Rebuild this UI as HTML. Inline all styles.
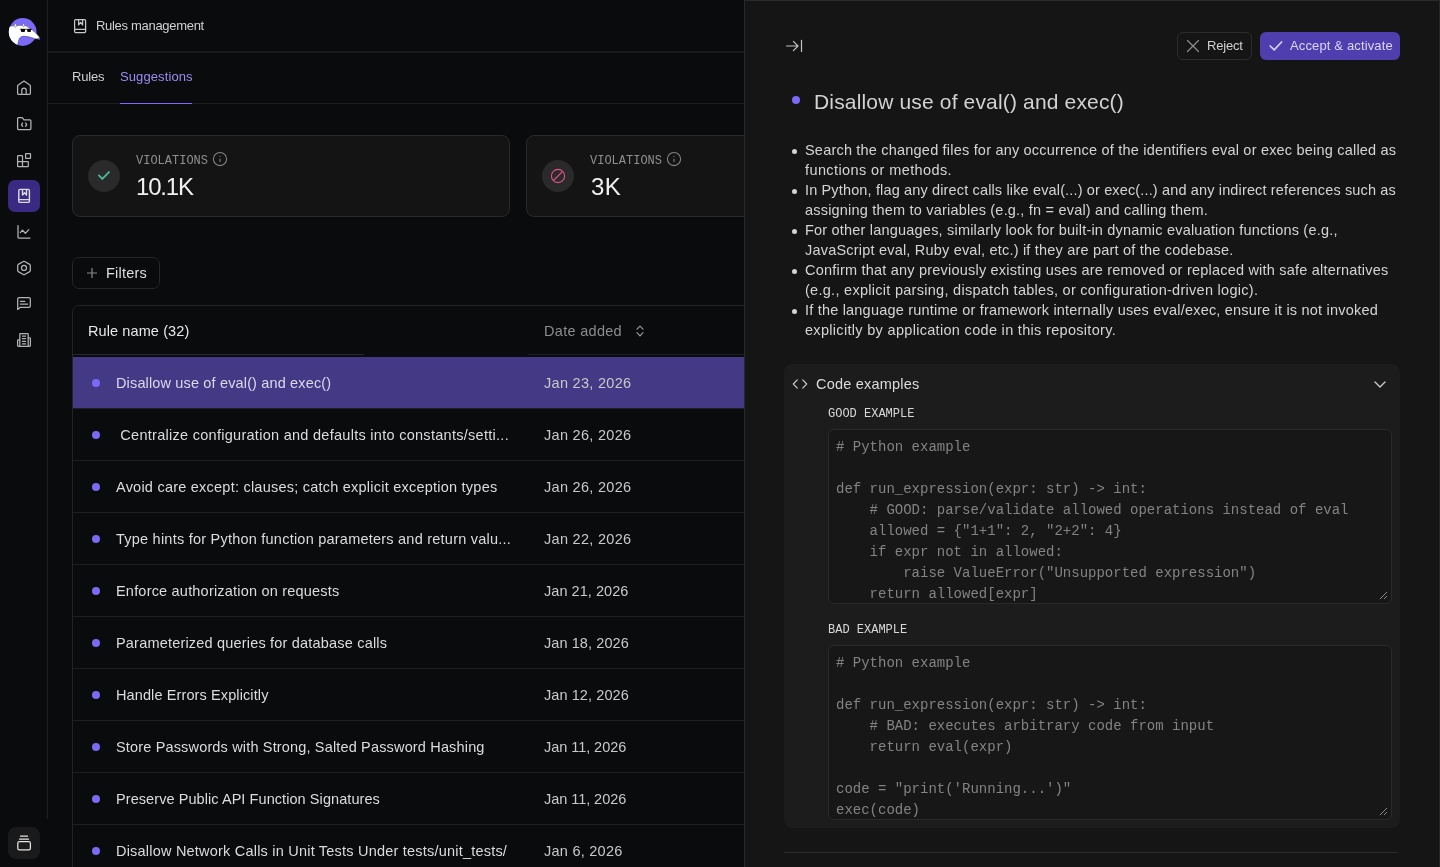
<!DOCTYPE html>
<html><head><meta charset="utf-8">
<style>
*{box-sizing:border-box;margin:0;padding:0}
html,body{width:1440px;height:867px;overflow:hidden;background:#0a0b0d;-webkit-font-smoothing:antialiased;font-family:"Liberation Sans",sans-serif;color:#e2e2e2}
.abs{position:absolute}
svg{position:absolute;overflow:visible}
.ic{fill:none;stroke:#b4b4b4;stroke-width:1.25;stroke-linecap:round;stroke-linejoin:round}
.mono{font-family:"Liberation Mono",monospace}
.t{position:absolute;white-space:nowrap}
#bul li{position:relative}
#bul li::before{content:"";position:absolute;left:-13px;top:9px;width:5px;height:5px;border-radius:3px;background:#d4d4d4}
</style></head><body><div id="root" style="position:absolute;left:0;top:0;width:1440px;height:867px;will-change:transform">

<!-- SIDEBAR -->
<div class="abs" style="left:47px;top:0;width:1px;height:819px;background:#1f1f20"></div>
<!-- logo -->
<svg style="left:0;top:0" width="48" height="60" viewBox="0 0 48 60">
  <defs><clipPath id="lc"><circle cx="22.7" cy="32" r="13.9"/><rect x="30" y="30" width="12" height="11"/></clipPath></defs>
  <circle cx="22.7" cy="32" r="13.9" fill="#7a6af5"/>
  <path clip-path="url(#lc)" d="M7 27.2 Q10 26.4 13.5 25.8 Q19 25.2 24.5 25.6 Q27 26.2 29 27.8 Q33 30.5 36 33.3 L38.9 36.6 Q39.8 37.8 38.8 38.6 L36 38.9 Q33.5 38.2 30.8 37.3 Q26.5 36 23.2 36.1 Q20.6 36.5 19.3 38.3 Q18 40.8 17.4 46.5 L6 46.5 Z" fill="#fff" stroke="#2c2850" stroke-width="0.35"/>
  <ellipse cx="15.3" cy="25.5" rx="1.05" ry="1.9" fill="#fff" stroke="#3a3470" stroke-width="0.4"/>
  <ellipse cx="23.6" cy="25.1" rx="0.95" ry="1.55" fill="#fff" stroke="#3a3470" stroke-width="0.4"/>
  <path d="M20.9 29.1 H25 V31 Q25 32.1 23.9 32.1 H22 Q20.9 32.1 20.9 31 Z" fill="#050505"/>
  <path d="M27.2 29.1 H31 V31 Q31 32.1 29.9 32.1 H28.3 Q27.2 32.1 27.2 31 Z" fill="#050505"/>
  <path d="M19.9 29.25 H31.8" stroke="#050505" stroke-width="0.75"/>
  <path d="M37.3 38.9 L40.2 37.5 L39.4 39.9 Z" fill="#7a6af5"/>
</svg>

<!-- home -->
<svg class="ic" style="left:14px;top:78px" width="20" height="20" viewBox="0 0 20 20">
  <path d="M3.6 8 Q3.6 7.3 4.2 6.9 L9.3 3.4 Q10 3 10.7 3.4 L15.8 6.9 Q16.4 7.3 16.4 8 V15.6 Q16.4 16.4 15.6 16.4 H4.4 Q3.6 16.4 3.6 15.6 Z"/>
  <path d="M7.8 16.4 V12.2 A2.2 2.2 0 0 1 12.2 12.2 V16.4"/>
</svg>
<!-- folder code -->
<svg class="ic" style="left:14px;top:114px" width="20" height="20" viewBox="0 0 20 20">
  <path d="M3.6 4.6 Q3.6 3.6 4.6 3.6 H8.2 L10 5.8 H15.9 Q16.9 5.8 16.9 6.8 V14.5 Q16.9 15.5 15.9 15.5 H4.6 Q3.6 15.5 3.6 14.5 Z"/>
  <path d="M8.6 9 L7.5 10.7 L8.6 12.4 M11.6 9 L12.7 10.7 L11.6 12.4"/>
</svg>
<!-- blocks -->
<svg class="ic" style="left:14px;top:150px" width="20" height="20" viewBox="0 0 20 20">
  <rect x="11.6" y="3.5" width="4.9" height="4.9" rx=".3"/>
  <path d="M3.6 6.3 Q3.6 5.7 4.2 5.7 H7.9 Q8.5 5.7 8.5 6.3 V11.5 H13.7 Q14.3 11.5 14.3 12.1 V15.9 Q14.3 16.5 13.7 16.5 H4.2 Q3.6 16.5 3.6 15.9 Z M3.6 11.5 H8.5 V16.5"/>
</svg>
<!-- active book -->
<div class="abs" style="left:8px;top:180px;width:32px;height:32px;border-radius:7px;background:#3a2a84"></div>
<svg class="ic" style="left:14px;top:186px;stroke:#dcdcdc;stroke-width:1.4" width="20" height="20" viewBox="0 0 20 20">
  <rect x="4.8" y="3.4" width="10.6" height="13" rx="1.2"/>
  <path d="M4.8 13.6 H15.4 M8.5 3.6 V9.1 L10.5 6.8 L12.5 9.1 V3.6"/>
</svg>
<!-- chart -->
<svg class="ic" style="left:14px;top:222px" width="20" height="20" viewBox="0 0 20 20">
  <path d="M4 3.6 V15.3 Q4 16 4.7 16 H16"/>
  <path d="M6.3 10.6 L8.5 8.2 L11.4 11.3 L14.8 7.6"/>
</svg>
<!-- hexagon -->
<svg class="ic" style="left:14px;top:258px" width="20" height="20" viewBox="0 0 20 20">
  <path d="M9.3 3.5 Q10 3.1 10.7 3.5 L15.7 6.4 Q16.3 6.8 16.3 7.5 V12.5 Q16.3 13.2 15.7 13.6 L10.7 16.5 Q10 16.9 9.3 16.5 L4.3 13.6 Q3.7 13.2 3.7 12.5 V7.5 Q3.7 6.8 4.3 6.4 Z"/>
  <circle cx="10" cy="9.95" r="2.5"/>
</svg>
<!-- message -->
<svg class="ic" style="left:14px;top:294px" width="20" height="20" viewBox="0 0 20 20">
  <path d="M3.7 15.6 V5.1 Q3.7 3.7 5.1 3.7 H14.9 Q16.3 3.7 16.3 5.1 V11.9 Q16.3 13.3 14.9 13.3 H6.3 Z"/>
  <path d="M6.4 7.4 H10.8 M6.4 10 H13.6"/>
</svg>
<!-- building -->
<svg class="ic" style="left:14px;top:330px" width="20" height="20" viewBox="0 0 20 20">
  <path d="M5.8 16.3 V4.3 Q5.8 3.6 6.5 3.6 H13.5 Q14.2 3.6 14.2 4.3 V16.3"/>
  <path d="M5.8 9.9 H4.3 Q3.6 9.9 3.6 10.6 V15.6 Q3.6 16.3 4.3 16.3 H15.7 Q16.4 16.3 16.4 15.6 V8.5 Q16.4 7.8 15.7 7.8 H14.2"/>
  <path d="M8.4 6.1 H11.6 M8.4 8.6 H11.6 M8.4 11.4 H11.6 M8.4 13.9 H11.6"/>
</svg>
<!-- bottom button -->
<div class="abs" style="left:8px;top:827px;width:32px;height:32px;border-radius:8px;background:#1a1a1b"></div>
<svg class="ic" style="left:8px;top:827px;stroke:#e4e4e4" width="32" height="32" viewBox="0 0 32 32">
  <rect x="9.8" y="14.6" width="12.6" height="8.2" rx="1.6"/>
  <path d="M11.5 12.1 H20.6 M12.5 9.2 H19.5"/>
</svg>

<!-- HEADER -->
<div class="abs" style="left:48px;top:51px;width:696px;height:2px;background:#19191a"></div>
<svg class="ic" style="left:70px;top:16px;stroke:#c8c8c8" width="20" height="20" viewBox="0 0 20 20">
  <rect x="4.6" y="3.5" width="11" height="13.1" rx="1.1"/>
  <path d="M4.6 13.4 H15.6 M8.6 3.6 V8.9 L10.6 6.5 L12.6 8.9 V3.6"/>
</svg>
<div class="t" style="left:96px;top:17px;font-size:13px;line-height:18px;letter-spacing:-0.3px;color:#d0d0d0">Rules management</div>

<!-- TABS -->
<div class="abs" style="left:48px;top:103px;width:696px;height:1px;background:#1e1e1f"></div>
<div class="t" style="left:72px;top:68px;font-size:13px;line-height:18px;letter-spacing:-0.2px;color:#cfcfcf">Rules</div>
<div class="t" style="left:120px;top:68px;font-size:13px;line-height:18px;letter-spacing:0.1px;color:#9b8cf2">Suggestions</div>
<div class="abs" style="left:120px;top:103px;width:72px;height:1px;background:#7d6df8"></div>

<!-- CARDS -->
<div class="abs" style="left:72px;top:135px;width:438px;height:82px;border:1px solid #29292a;border-radius:8px;background:#141414"></div>
<div class="abs" style="left:88px;top:160px;width:32px;height:32px;border-radius:16px;background:#2a2a2a"></div>
<svg style="left:88px;top:160px" width="32" height="32" viewBox="0 0 32 32"><path d="M10.9 15.4 L14.3 18.9 L21 12.1" fill="none" stroke="#4cb69d" stroke-width="1.9" stroke-linecap="round" stroke-linejoin="round"/></svg>
<div class="t mono" style="left:136px;top:153px;font-size:12px;line-height:16px;color:#8f8f8f">VIOLATIONS</div>
<svg style="left:212px;top:151px" width="16" height="16" viewBox="0 0 16 16"><circle cx="8" cy="8" r="6.6" fill="none" stroke="#858585" stroke-width="1.05"/><path d="M8 7.7 V11" stroke="#757575" stroke-width="1.25"/><path d="M7.4 5.4 H8.6" stroke="#757575" stroke-width="1"/></svg>
<div class="t" style="left:136px;top:172px;font-size:24px;line-height:30px;letter-spacing:-1.2px;color:#f0f0f0">10.1K</div>

<div class="abs" style="left:526px;top:135px;width:438px;height:82px;border:1px solid #29292a;border-radius:8px;background:#141414"></div>
<div class="abs" style="left:542px;top:160px;width:32px;height:32px;border-radius:16px;background:#2a2a2a"></div>
<svg style="left:542px;top:160px" width="32" height="32" viewBox="0 0 32 32"><circle cx="16" cy="16" r="6.6" fill="none" stroke="#dc5287" stroke-width="1.1"/><path d="M11.5 20.5 L20.5 11.5" stroke="#dc5287" stroke-width="1.1"/></svg>
<div class="t mono" style="left:590px;top:153px;font-size:12px;line-height:16px;color:#8f8f8f">VIOLATIONS</div>
<svg style="left:666px;top:151px" width="16" height="16" viewBox="0 0 16 16"><circle cx="8" cy="8" r="6.6" fill="none" stroke="#858585" stroke-width="1.05"/><path d="M8 7.7 V11" stroke="#757575" stroke-width="1.25"/><path d="M7.4 5.4 H8.6" stroke="#757575" stroke-width="1"/></svg>
<div class="t" style="left:591px;top:172px;font-size:24px;line-height:30px;letter-spacing:0.3px;color:#f0f0f0">3K</div>

<!-- FILTERS -->
<div class="abs" style="left:72px;top:257px;width:88px;height:32px;border:1px solid #262627;border-radius:7px"></div>
<svg style="left:86px;top:267px" width="12" height="12" viewBox="0 0 12 12"><path d="M6 1 V11 M1 6 H11" stroke="#8a8a8a" stroke-width="1.2"/></svg>
<div class="t" style="left:106px;top:263px;font-size:14.5px;line-height:20px;letter-spacing:0.2px;color:#dedede">Filters</div>

<!-- TABLE -->
<div class="abs" style="left:72px;top:305px;width:700px;height:600px;border:1px solid #232325;border-radius:7px"></div>
<div class="t" style="left:88px;top:321px;font-size:14.5px;line-height:20px;letter-spacing:0.1px;color:#e8e8e8">Rule name (32)</div>
<div class="t" style="left:544px;top:321px;font-size:14.5px;line-height:20px;letter-spacing:0.3px;color:#8c8c8c">Date added</div>
<svg style="left:632px;top:322px" width="16" height="18" viewBox="0 0 16 18"><path d="M5 7.2 L8 4.1 L11 7.2 M5 10.7 L8 13.8 L11 10.7" fill="none" stroke="#9a9a9a" stroke-width="1.2" stroke-linecap="round" stroke-linejoin="round"/></svg>
<div class="abs" style="left:73px;top:354px;width:291px;height:1px;background:#2a2a2b"></div>
<div class="abs" style="left:528px;top:354px;width:216px;height:1px;background:#1c1c1d"></div>
<!-- ROWS -->
<div class="abs" style="left:73px;top:357px;width:671px;height:51px;background:#433984"></div>
<div class="abs" style="left:92px;top:379px;width:8px;height:8px;border-radius:4px;background:#7a6af5"></div>
<div class="t" style="left:116px;top:373px;font-size:14.5px;line-height:20px;letter-spacing:0.15px;color:#dcd8ee">Disallow use of eval() and exec()</div>
<div class="t" style="left:544px;top:373px;font-size:14.5px;line-height:20px;letter-spacing:0.3px;color:#c9c9c9">Jan 23, 2026</div>
<div class="abs" style="left:73px;top:408px;width:671px;height:1px;background:#1f1f21"></div>
<div class="abs" style="left:92px;top:431px;width:8px;height:8px;border-radius:4px;background:#7a6af5"></div>
<div class="t" style="left:116px;top:425px;font-size:14.5px;line-height:20px;letter-spacing:0.28px;color:#dcdcdc">&nbsp;Centralize configuration and defaults into constants/setti...</div>
<div class="t" style="left:544px;top:425px;font-size:14.5px;line-height:20px;letter-spacing:0.3px;color:#c9c9c9">Jan 26, 2026</div>
<div class="abs" style="left:73px;top:460px;width:671px;height:1px;background:#1f1f21"></div>
<div class="abs" style="left:92px;top:483px;width:8px;height:8px;border-radius:4px;background:#7a6af5"></div>
<div class="t" style="left:116px;top:477px;font-size:14.5px;line-height:20px;letter-spacing:0.23px;color:#dcdcdc">Avoid care except: clauses; catch explicit exception types</div>
<div class="t" style="left:544px;top:477px;font-size:14.5px;line-height:20px;letter-spacing:0.3px;color:#c9c9c9">Jan 26, 2026</div>
<div class="abs" style="left:73px;top:512px;width:671px;height:1px;background:#1f1f21"></div>
<div class="abs" style="left:92px;top:535px;width:8px;height:8px;border-radius:4px;background:#7a6af5"></div>
<div class="t" style="left:116px;top:529px;font-size:14.5px;line-height:20px;letter-spacing:0.23px;color:#dcdcdc">Type hints for Python function parameters and return valu...</div>
<div class="t" style="left:544px;top:529px;font-size:14.5px;line-height:20px;letter-spacing:0.3px;color:#c9c9c9">Jan 22, 2026</div>
<div class="abs" style="left:73px;top:564px;width:671px;height:1px;background:#1f1f21"></div>
<div class="abs" style="left:92px;top:587px;width:8px;height:8px;border-radius:4px;background:#7a6af5"></div>
<div class="t" style="left:116px;top:581px;font-size:14.5px;line-height:20px;letter-spacing:0.2px;color:#dcdcdc">Enforce authorization on requests</div>
<div class="t" style="left:544px;top:581px;font-size:14.5px;line-height:20px;letter-spacing:0.05px;color:#c9c9c9">Jan 21, 2026</div>
<div class="abs" style="left:73px;top:616px;width:671px;height:1px;background:#1f1f21"></div>
<div class="abs" style="left:92px;top:639px;width:8px;height:8px;border-radius:4px;background:#7a6af5"></div>
<div class="t" style="left:116px;top:633px;font-size:14.5px;line-height:20px;letter-spacing:0.19px;color:#dcdcdc">Parameterized queries for database calls</div>
<div class="t" style="left:544px;top:633px;font-size:14.5px;line-height:20px;letter-spacing:0.08px;color:#c9c9c9">Jan 18, 2026</div>
<div class="abs" style="left:73px;top:668px;width:671px;height:1px;background:#1f1f21"></div>
<div class="abs" style="left:92px;top:691px;width:8px;height:8px;border-radius:4px;background:#7a6af5"></div>
<div class="t" style="left:116px;top:685px;font-size:14.5px;line-height:20px;letter-spacing:0.11px;color:#dcdcdc">Handle Errors Explicitly</div>
<div class="t" style="left:544px;top:685px;font-size:14.5px;line-height:20px;letter-spacing:0.08px;color:#c9c9c9">Jan 12, 2026</div>
<div class="abs" style="left:73px;top:720px;width:671px;height:1px;background:#1f1f21"></div>
<div class="abs" style="left:92px;top:743px;width:8px;height:8px;border-radius:4px;background:#7a6af5"></div>
<div class="t" style="left:116px;top:737px;font-size:14.5px;line-height:20px;letter-spacing:0.16px;color:#dcdcdc">Store Passwords with Strong, Salted Password Hashing</div>
<div class="t" style="left:544px;top:737px;font-size:14.5px;line-height:20px;letter-spacing:-0.05px;color:#c9c9c9">Jan 11, 2026</div>
<div class="abs" style="left:73px;top:772px;width:671px;height:1px;background:#1f1f21"></div>
<div class="abs" style="left:92px;top:795px;width:8px;height:8px;border-radius:4px;background:#7a6af5"></div>
<div class="t" style="left:116px;top:789px;font-size:14.5px;line-height:20px;letter-spacing:0.07px;color:#dcdcdc">Preserve Public API Function Signatures</div>
<div class="t" style="left:544px;top:789px;font-size:14.5px;line-height:20px;letter-spacing:-0.05px;color:#c9c9c9">Jan 11, 2026</div>
<div class="abs" style="left:73px;top:824px;width:671px;height:1px;background:#1f1f21"></div>
<div class="abs" style="left:92px;top:847px;width:8px;height:8px;border-radius:4px;background:#7a6af5"></div>
<div class="t" style="left:116px;top:841px;font-size:14.5px;line-height:20px;letter-spacing:0.21px;color:#dcdcdc">Disallow Network Calls in Unit Tests Under tests/unit_tests/</div>
<div class="t" style="left:544px;top:841px;font-size:14.5px;line-height:20px;letter-spacing:0.25px;color:#c9c9c9">Jan 6, 2026</div>
<!-- /ROWS -->

<!-- RIGHT PANEL -->
<div class="abs" style="left:744px;top:0;width:696px;height:867px;background:#151515;border-left:1px solid #2a2a2a;border-top:1px solid #2a2a2a;border-right:1px solid #262626"></div>
<svg style="left:784px;top:38px" width="20" height="16" viewBox="0 0 20 16"><path d="M2.6 8 H13.6 M9.4 3.4 L14 8 L9.4 12.6 M17.5 2.4 V13.4" fill="none" stroke="#c4c4c4" stroke-width="1.2" stroke-linecap="round" stroke-linejoin="round"/></svg>

<div class="abs" style="left:1177px;top:32px;width:75px;height:28px;border:1px solid #2c2c2c;border-radius:6px;background:#151515"></div>
<svg style="left:1186px;top:39px" width="14" height="14" viewBox="0 0 14 14"><path d="M1.5 1.5 L12.5 12.5 M12.5 1.5 L1.5 12.5" stroke="#8e8e8e" stroke-width="1.2" stroke-linecap="round"/></svg>
<div class="t" style="left:1207px;top:37px;font-size:13px;line-height:18px;letter-spacing:-0.2px;color:#d0d0d0">Reject</div>

<div class="abs" style="left:1260px;top:32px;width:140px;height:28px;border-radius:6px;background:#4f3ead"></div>
<svg style="left:1268px;top:39px" width="16" height="14" viewBox="0 0 16 14"><path d="M2.2 7 L6.2 10.8 L13.6 3" fill="none" stroke="#d6cffc" stroke-width="1.7" stroke-linecap="round" stroke-linejoin="round"/></svg>
<div class="t" style="left:1290px;top:37px;font-size:13px;line-height:18px;letter-spacing:0.14px;color:#dcd6fb">Accept &amp; activate</div>

<div class="abs" style="left:792px;top:96px;width:8px;height:8px;border-radius:4px;background:#7a6af5"></div>
<div class="t" style="left:814px;top:88px;font-size:21px;line-height:28px;letter-spacing:0.16px;color:#d2d2d2">Disallow use of eval() and exec()</div>

<ul id="bul" style="position:absolute;left:805px;top:140px;width:620px;list-style:none;font-size:14.5px;line-height:20px;color:#d4d4d4">
<li><span style="letter-spacing:0.2px">Search the changed files for any occurrence of the identifiers eval or exec being called as</span><br><span style="letter-spacing:0.4px">functions or methods.</span></li>
<li><span style="letter-spacing:0.145px">In Python, flag any direct calls like eval(...) or exec(...) and any indirect references such as</span><br><span style="letter-spacing:0.2px">assigning them to variables (e.g., fn = eval) and calling them.</span></li>
<li><span style="letter-spacing:0.2px">For other languages, similarly look for built-in dynamic evaluation functions (e.g.,</span><br><span style="letter-spacing:0.2px">JavaScript eval, Ruby eval, etc.) if they are part of the codebase.</span></li>
<li><span style="letter-spacing:0.21px">Confirm that any previously existing uses are removed or replaced with safe alternatives</span><br><span style="letter-spacing:0.28px">(e.g., explicit parsing, dispatch tables, or configuration-driven logic).</span></li>
<li><span style="letter-spacing:0.2px">If the language runtime or framework internally uses eval/exec, ensure it is not invoked</span><br><span style="letter-spacing:0.31px">explicitly by application code in this repository.</span></li>
</ul>

<div class="abs" style="left:784px;top:364px;width:616px;height:464px;border-radius:8px;background:#1c1c1c"></div>
<svg style="left:790px;top:376px" width="20" height="16" viewBox="0 0 20 16"><path d="M7.3 3.9 L3.3 8 L7.3 12.1 M12.7 3.9 L16.7 8 L12.7 12.1" fill="none" stroke="#c8c8c8" stroke-width="1.2" stroke-linecap="round" stroke-linejoin="round"/></svg>
<div class="t" style="left:816px;top:374px;font-size:14.5px;line-height:20px;letter-spacing:0.2px;color:#dcdcdc">Code examples</div>
<svg style="left:1372px;top:376px" width="16" height="16" viewBox="0 0 16 16"><path d="M3 6 L8 11 L13 6" fill="none" stroke="#cfcfcf" stroke-width="1.3" stroke-linecap="round" stroke-linejoin="round"/></svg>

<div class="t mono" style="left:828px;top:406px;font-size:12px;line-height:16px;color:#d8d8d8">GOOD EXAMPLE</div>
<div class="abs" style="left:828px;top:429px;width:564px;height:175px;border:1px solid #2a2a2a;border-radius:6px;background:#171717"></div>
<pre class="t mono" style="white-space:pre;left:836px;top:437px;font-size:14px;line-height:21px;color:#838383">
# Python example

def run_expression(expr: str) -&gt; int:
    # GOOD: parse/validate allowed operations instead of eval
    allowed = {"1+1": 2, "2+2": 4}
    if expr not in allowed:
        raise ValueError("Unsupported expression")
    return allowed[expr]</pre>
<svg style="left:1378px;top:590px" width="10" height="10" viewBox="0 0 10 10"><path d="M2 9 L9 2 M6 9 L9 6" stroke="#8a8a8a" stroke-width="1"/></svg>

<div class="t mono" style="left:828px;top:622px;font-size:12px;line-height:16px;color:#d8d8d8">BAD EXAMPLE</div>
<div class="abs" style="left:828px;top:645px;width:564px;height:175px;border:1px solid #2a2a2a;border-radius:6px;background:#171717"></div>
<pre class="t mono" style="white-space:pre;left:836px;top:653px;font-size:14px;line-height:21px;color:#838383">
# Python example

def run_expression(expr: str) -&gt; int:
    # BAD: executes arbitrary code from input
    return eval(expr)

code = "print('Running...')"
exec(code)</pre>
<svg style="left:1378px;top:806px" width="10" height="10" viewBox="0 0 10 10"><path d="M2 9 L9 2 M6 9 L9 6" stroke="#8a8a8a" stroke-width="1"/></svg>

<div class="abs" style="left:784px;top:852px;width:614px;height:1px;background:#2a2a2a"></div>

</div></body></html>
